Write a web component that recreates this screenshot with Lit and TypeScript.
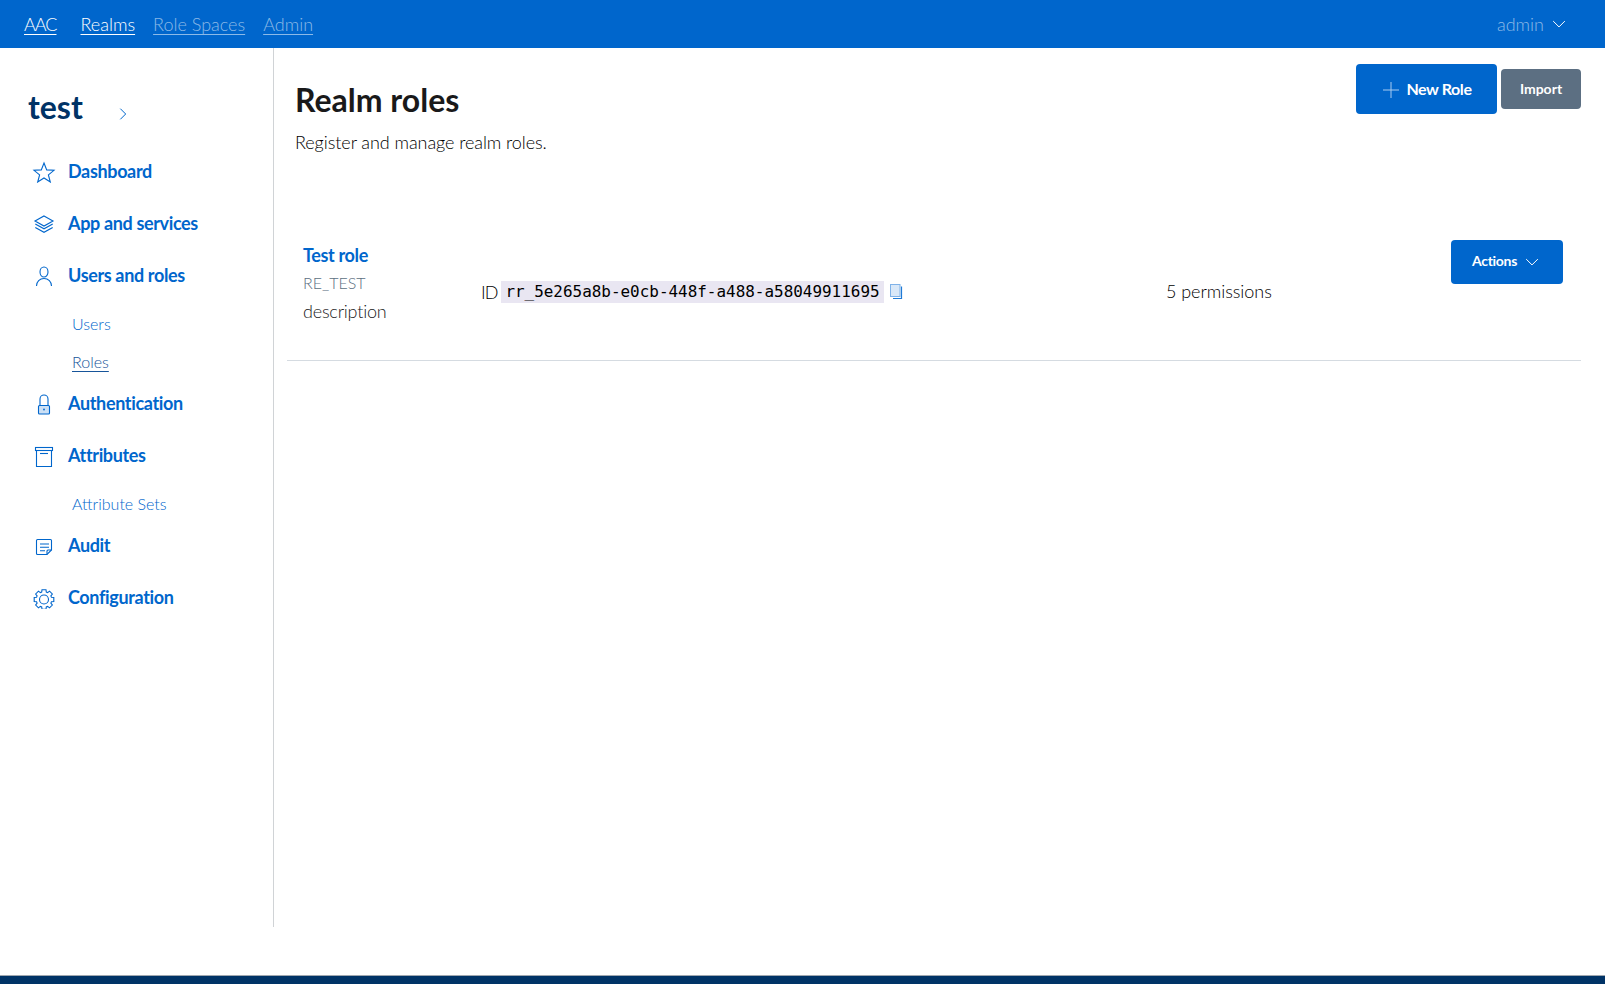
import { LitElement, css, html, svg } from "lit";
import { customElement } from "lit/decorators.js";

// gear outline: 8 teeth round a centre
const gearPath = (cx: number, cy: number, outer: number, inner: number) => {
  const pts: string[] = [];
  for (let i = 0; i < 8; i++) {
    const a = (i * Math.PI) / 4;
    for (const [off, r] of [[-0.3, inner], [-0.2, outer], [0.2, outer], [0.3, inner]]) {
      pts.push(`${(cx + Math.cos(a + off) * r).toFixed(2)} ${(cy + Math.sin(a + off) * r).toFixed(2)}`);
    }
  }
  return `M${pts.join("L")}z`;
};

const icons: Record<string, unknown> = {
  star: svg`<path d="M12 4l2.700 6.900 7.300.4-5.600 4.600 1.900 7.100L12 19l-6.300 4 1.900-7.100L2 11.300l7.300-.4z"/>`,
  stack: svg`<path d="M12 5l9 5-9 5-9-5z"/><path d="M3.300 13l8.700 4.800 8.700-4.800"/><path d="M3.300 16.500l8.700 4.800 8.700-4.800"/>`,
  user: svg`<ellipse cx="12" cy="9" rx="4" ry="5"/><path d="M4.500 23c0-4.500 3.200-7.500 7.500-7.500s7.500 3 7.500 7.500"/>`,
  lock: svg`<rect x="6.500" y="14.500" width="11" height="8.500" rx="1" class="soft"/><path d="M8 14.500V8a4 4 0 0 1 8 0v6.500"/><circle cx="12" cy="18.500" r=".9" class="solid"/>`,
  box: svg`<rect x="3.500" y="4.500" width="17" height="3"/><path d="M4.500 7.500v16h15v-16"/><path d="M8 10.500h8"/>`,
  note: svg`<path d="M5.500 6.500h13a1 1 0 0 1 1 1v9.500l-4.500 4.500H5.500a1 1 0 0 1-1-1v-13a1 1 0 0 1 1-1z"/><path d="M19.500 17H16a1 1 0 0 0-1 1v3.500"/><path d="M8 11h9M8 14.300h9M8 17.700h5"/>`,
  gear: svg`<circle cx="12" cy="14.500" r="4.500"/><path d="${gearPath(12, 14.5, 10, 7.8)}"/>`,
};

const icon = (name: string) =>
  html`<svg class="icon" viewBox="0 0 24 24">${icons[name]}</svg>`;

const chevron = () =>
  html`<svg class="chev" viewBox="0 0 24 24"><path d="M5 8.500l7 7 7-7" /></svg>`;

type NavItem = { label: string; icon: string; subs?: { label: string; active?: boolean }[] };

const NAV: NavItem[] = [
  { label: "Dashboard", icon: "star" },
  { label: "App and services", icon: "stack" },
  { label: "Users and roles", icon: "user", subs: [{ label: "Users" }, { label: "Roles", active: true }] },
  { label: "Authentication", icon: "lock" },
  { label: "Attributes", icon: "box", subs: [{ label: "Attribute Sets" }] },
  { label: "Audit", icon: "note" },
  { label: "Configuration", icon: "gear" },
];

@customElement("app-root")
export class AppRoot extends LitElement {
  static styles = css`
    :host {
      display: flex;
      flex-direction: column;
      height: 984px;
      overflow: hidden;
      background: #fff;
      font-family: "Lato", "Liberation Sans", sans-serif;
      color: #19191a;
      --blue: #0066cc;
    }
    a { text-decoration: none; color: inherit; }
    svg { fill: none; stroke: currentColor; stroke-width: 1; flex: none; }
    .chev { width: 20px; height: 20px; stroke-width: 1.2; color: #fff; }

    .topbar {
      height: 48px;
      flex: none;
      background: var(--blue);
      display: flex;
      align-items: center;
      padding: 0 36px 0 24px;
      font-size: 18px;
      font-weight: 300;
      color: #fff;
    }
    .topbar a { text-decoration: underline; text-underline-offset: 3px; margin-right: 18px; }
    .topbar a.brand { margin-right: 24px; letter-spacing: -1px; }
    .topbar a.dim { color: rgba(255, 255, 255, 0.55); }
    .user { margin-left: auto; display: flex; align-items: center; gap: 5px; color: rgba(255, 255, 255, 0.55); }

    .body { flex: 1; display: flex; }
    .sidebar {
      width: 274px;
      height: 879px;
      flex: none;
      box-sizing: border-box;
      border-right: 1px solid #d0d3d6;
      padding: 35px 0 0 28px;
    }
    .realm { display: flex; align-items: center; height: 46px; margin-bottom: 16px; }
    .realm b { font-size: 32px; font-weight: 700; color: #003366; width: 87px; }
    .realm svg { width: 16px; height: 16px; stroke-width: 1.5; color: var(--blue); margin-top: 15px; }
    .item {
      display: flex;
      align-items: center;
      height: 52px;
      gap: 12px;
      padding-left: 4px;
      font-size: 18px;
      font-weight: 700;
      letter-spacing: -0.35px;
      color: var(--blue);
    }
    .icon { width: 24px; height: 24px; stroke-width: 1.1; color: var(--blue); }
    .icon .soft { fill: rgba(0, 102, 204, 0.2); }
    .icon .solid { fill: currentColor; stroke: none; }
    .subs { display: flex; flex-direction: column; padding: 4px 0 0 44px; margin-bottom: -4px; }
    .sub { height: 38px; line-height: 38px; font-size: 16px; font-weight: 300; color: var(--blue); }
    .sub.active { color: #17559a; }
    .sub.active span { text-decoration: underline; text-underline-offset: 3px; }

    .main { flex: 1; padding: 16px 24px 0 13px; min-width: 0; }
    .head { display: flex; align-items: flex-start; padding-left: 8px; height: 170px; }
    h1 { margin: 16px 0 0; font-size: 32px; line-height: 40px; font-weight: 700; color: #19191a; }
    .head p { margin: 9px 0 0; font-size: 18px; line-height: 27px; font-weight: 300; color: #000; letter-spacing: -0.07px; }
    .head .actions { margin-left: auto; display: flex; align-items: center; gap: 4px; }
    .btn {
      display: flex;
      align-items: center;
      justify-content: center;
      background: var(--blue);
      color: #fff;
      border-radius: 4px;
      font-weight: 700;
    }
    .btn.new { width: 141px; height: 50px; box-sizing: border-box; padding: 0 0 2px 2px; font-size: 16px; gap: 7px; letter-spacing: -0.4px; }
    .btn.new svg { width: 16px; height: 16px; color: #a9cbf0; margin-top: 4px; }
    .btn.import { width: 80px; height: 40px; box-sizing: border-box; padding-bottom: 2px; font-size: 14px; background: #5c6f82; }
    .btn.act { width: 112px; height: 44px; box-sizing: border-box; padding-bottom: 4px; font-size: 14px; gap: 5px; margin-top: 6px; letter-spacing: -0.3px; }
    .btn.act .chev { margin-top: 4px; }

    .row {
      display: grid;
      grid-template-columns: 178px 685px 1fr auto;
      align-items: center;
      padding: 0 18px 13px 16px;
      border-bottom: 1px solid #d5dbe1;
      height: 127px;
      box-sizing: border-box;
    }
    .info { display: flex; flex-direction: column; font-size: 18px; font-weight: 300; padding-bottom: 16px; letter-spacing: -0.2px; }
    .info a { font-weight: 700; color: var(--blue); line-height: 28px; letter-spacing: -0.35px; }
    .info span { font-size: 16px; color: #5c6f82; line-height: 28px; letter-spacing: 0; }
    .info div { line-height: 28px; }
    .id { display: flex; align-items: center; font-size: 18px; font-weight: 300; padding-top: 2px; color: #000; }
    .id span { letter-spacing: -1px; }
    code {
      font-family: "DejaVu Sans Mono", "Liberation Mono", monospace;
      font-size: 15.95px;
      background: #e9e6f2;
      padding: 0 4px;
      margin: 0 6px 0 4px;
      line-height: 22px;
    }
    .copy { width: 13px; height: 15px; }
    .copy .front { fill: #d9e8f8; stroke: #7fb2e8; }
    .copy .back { stroke: #1f7ad6; stroke-width: 1.2; }
    .perms { font-size: 18px; font-weight: 300; padding-top: 1px; color: #000; letter-spacing: -0.05px; }
    .row .btn { align-self: start; }

    footer { height: 9px; box-sizing: border-box; flex: none; background: #003366; border-top: 1px solid #a0a8b0; }
  `;

  render() {
    return html`
      <div class="topbar">
        <a class="brand" href="#">AAC</a>
        <a href="#">Realms</a>
        <a class="dim" href="#">Role Spaces</a>
        <a class="dim" href="#">Admin</a>
        <div class="user">admin ${chevron()}</div>
      </div>
      <div class="body">
        <nav class="sidebar">
          <div class="realm">
            <b>test</b>
            <svg viewBox="0 0 24 24"><path d="M8 4l8 8-8 8" /></svg>
          </div>
          ${NAV.map(
            (n) => html`
              <a class="item" href="#">${icon(n.icon)}${n.label}</a>
              ${n.subs
                ? html`<div class="subs">
                    ${n.subs.map(
                      (s) => html`<a class="sub ${s.active ? "active" : ""}" href="#"><span>${s.label}</span></a>`
                    )}
                  </div>`
                : ""}
            `
          )}
        </nav>
        <main class="main">
          <div class="head">
            <div>
              <h1>Realm roles</h1>
              <p>Register and manage realm roles.</p>
            </div>
            <div class="actions">
              <a class="btn new" href="#">
                <svg viewBox="0 0 16 16"><path d="M8 0v16M0 8h16" /></svg>
                New Role
              </a>
              <a class="btn import" href="#">Import</a>
            </div>
          </div>
          <div class="row">
            <div class="info">
              <a href="#">Test role</a>
              <span>RE_TEST</span>
              <div>description</div>
            </div>
            <div class="id">
              <span>ID</span><code>rr_5e265a8b-e0cb-448f-a488-a58049911695</code>
              <svg class="copy" viewBox="0 0 13 15">
                <rect class="front" x="0.500" y="0.500" width="9.500" height="12" />
                <path class="back" d="M11.500 2.500v12H3" />
              </svg>
            </div>
            <div class="perms">5 permissions</div>
            <a class="btn act" href="#">Actions ${chevron()}</a>
          </div>
        </main>
      </div>
      <footer></footer>
    `;
  }
}
